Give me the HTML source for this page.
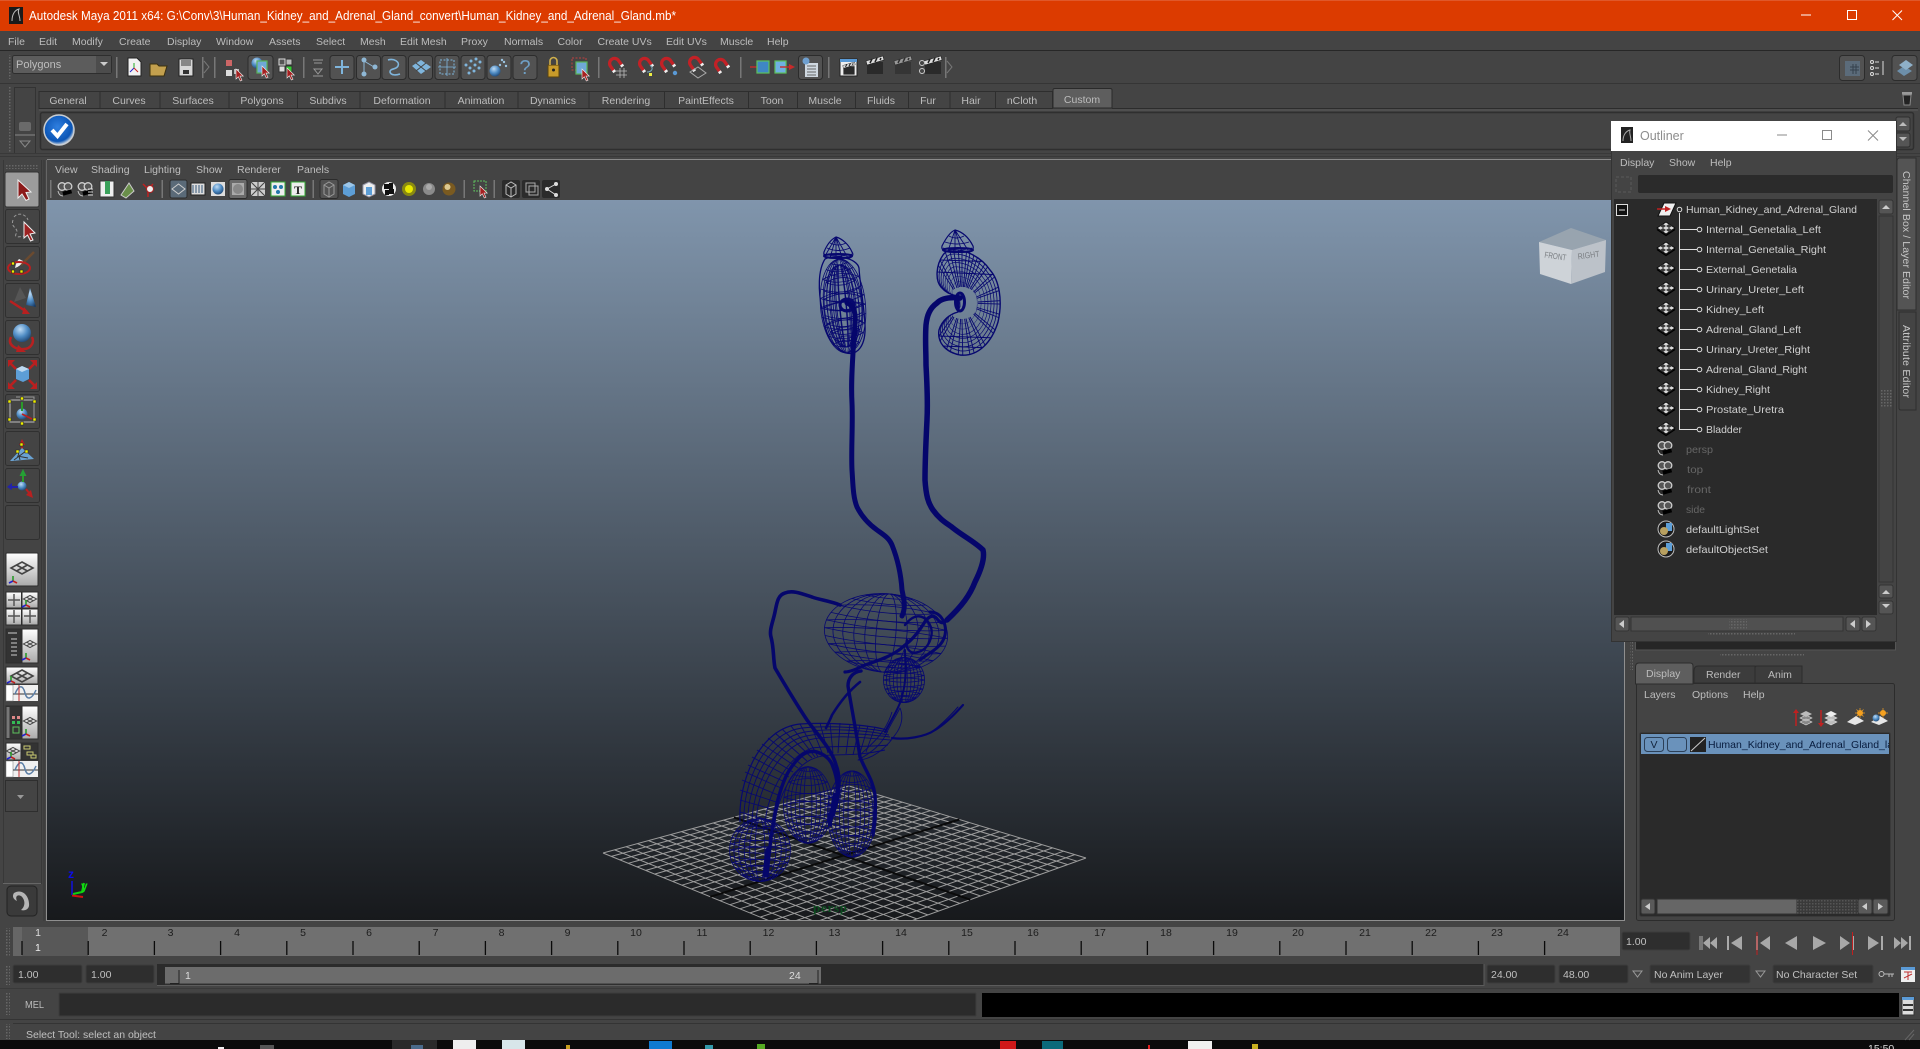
<!DOCTYPE html>
<html><head><meta charset="utf-8"><title>Autodesk Maya 2011</title>
<style>
html,body{margin:0;padding:0;background:#444;width:1920px;height:1049px;overflow:hidden}
svg{position:absolute;left:0;top:0;display:block}
text{font-family:"Liberation Sans",sans-serif;font-size:10.5px;fill:#bdbdbd}
.c{text-anchor:middle}
.o{fill:#d0d0d0}
.g{fill:#666}
.i{fill:#c0c0c0}
.sel{fill:#525252;stroke:#2c2c2c}
</style></head><body>
<svg width="1920" height="1049" viewBox="0 0 1920 1049">
<defs>
<linearGradient id="vp" x1="0" y1="0" x2="0" y2="1"><stop offset="0" stop-color="#8095ac"/><stop offset="1" stop-color="#17191c"/></linearGradient>
<clipPath id="vc"><rect x="47" y="200" width="1577" height="720"/></clipPath>
<symbol id="m" viewBox="-51 -51 102 102" preserveAspectRatio="none" overflow="visible">
<g fill="none" stroke="#07086f" stroke-width=".8">
<circle r="50" vector-effect="non-scaling-stroke"/><ellipse rx="8" ry="50" vector-effect="non-scaling-stroke"/><ellipse rx="17" ry="50" vector-effect="non-scaling-stroke"/><ellipse rx="26" ry="50" vector-effect="non-scaling-stroke"/><ellipse rx="35" ry="50" vector-effect="non-scaling-stroke"/><ellipse rx="43" ry="50" vector-effect="non-scaling-stroke"/>
<path vector-effect="non-scaling-stroke" d="M-50 0Q0 10 50 0M-49 -10Q0 0 49 -10M-46 -20Q0 -10 46 -20M-40 -30Q0 -21 40 -30M-30 -40Q0 -33 30 -40M-19 -46Q0 -42 19 -46M-49 10Q0 20 49 10M-46 20Q0 30 46 20M-40 30Q0 39 40 30M-30 40Q0 47 30 40"/>
<path vector-effect="non-scaling-stroke" d="M-49 -10Q0 -20 49 -10M-46 20Q0 10 46 20M-40 -30Q0 -39 40 -30M-40 30Q0 21 40 30M-50 0Q0 -9 50 0M-30 40Q0 33 30 40"/>
</g></symbol>
<path id="bean" d="M943 255C936 265 935 280 941 287C946 293 952 295 957 296L958 312C950 314 942 320 939 330C937 342 945 352 960 355C978 357 992 342 998 322C1003 300 999 280 990 270C982 258 965 248 950 250C947 251 945 252 943 255Z"/>
<clipPath id="bc"><use href="#bean"/></clipPath>
<path id="ribs" d="M953.500 289.500L935 260M957 288L943 245M959.500 287L952 240M962 287L962 240M964.500 287L972 240M967 288L982 244M970 289L992 252M973.500 292L1002 265M976.500 297L1010 282M978 302L1012 300M977 307.500L1012 318M974.500 313L1005 338M970 317L992 358M966 318.500L977 365M962 319L963 365M958 318.500L948 362M954 317L935 350M950 314L932 330"/>
<path id="cs" d="M0 0V10L2.300 7.800L4.300 12L6 11.200L4 7.100H7.300Z"/>
<g id="mesh"><path d="M-9 0L0 -6L9 0L0 6Z" fill="#dadada" stroke="#0c0c0c" stroke-width=".9"/><path d="M-3 -4L0 -2L-3 0L-6 -2ZM3 -4L6 -2L3 0L0 -2ZM3 0L6 2L3 4L0 2ZM-3 0L0 2L-3 4L-6 2Z" fill="#3a3a3a"/><path d="M-9 1.500L0 7.500L9 1.500" stroke="#000" fill="none" stroke-width="1.200"/></g>
<g id="cam"><circle cx="-3" cy="-3.500" r="3.800" fill="#555" stroke="#cfcfcf" stroke-width="1.300"/><circle cx="3" cy="-3.500" r="3.800" fill="#555" stroke="#cfcfcf" stroke-width="1.300"/><rect x="-3" y="1" width="9" height="4" fill="#000" transform="rotate(-15)"/><path d="M-7 1Q-6 6 -2 6" stroke="#bbb" fill="none"/></g>
<g id="set"><circle r="8" fill="#1c1c1c" stroke="#bbb" stroke-width="1"/><rect x="0" y="-6" width="6" height="8" fill="#5d9ed6"/><circle cx="-2" cy="2" r="4" fill="#b8a060"/></g>
<g id="mg"><g transform="scale(.82)"><path d="M-6 5V-1A6 6 0 0 1 6 -1V5" fill="none" stroke="#c32126" stroke-width="4" transform="rotate(-35)"/><path d="M-6 5V8M6 5V8" stroke="#eee" stroke-width="4" transform="rotate(-35)"/></g></g>
<g id="dm"><path d="M0 -6L11 0L0 6L-11 0ZM-5.500 -3L5.500 3M5.500 -3L-5.500 3" stroke="#444" fill="none" stroke-width="1.600"/></g>
<g id="ax"><path d="M0 0V-5" stroke="#2a9a2a" stroke-width="1.600"/><path d="M0 0L-4 2" stroke="#2222cc" stroke-width="1.600"/><path d="M0 0L4 2" stroke="#c02020" stroke-width="1.600"/></g>
<g id="wv"><rect x="-16" y="-8" width="32" height="16" fill="#f0f0f0"/><rect x="-16" y="-8" width="7" height="16" fill="#fff" stroke="#777" stroke-width=".5"/><path d="M-9 1H16" stroke="#333"/><path d="M-7 1C-3 -9 1 -8 3 0C5 8 10 6 14 -3" stroke="#5a7ea6" stroke-width="1.500" fill="none"/><path d="M-3 -8V8" stroke="#c03030"/></g>
<g id="clap"><rect x="-8" y="-4" width="16" height="12" fill="#2a2a2a"/><path d="M-9 -5L8 -10L9 -6L-8 -1Z" fill="#ddd" stroke="#222" stroke-width=".6"/><path d="M-5 -3L-3 -7M0 -4L2 -8M5 -6L6 -8" stroke="#222" stroke-width="1.500"/></g>
<pattern id="hatch" width="3" height="3" patternUnits="userSpaceOnUse"><rect width="3" height="3" fill="#3a3a3a"/><rect width="1.500" height="1.500" fill="#555"/></pattern>
<pattern id="dots" width="3" height="3" patternUnits="userSpaceOnUse"><rect width="1.500" height="1.500" fill="#666"/></pattern>
<linearGradient id="wg" x1="0" y1="0" x2="0" y2="1"><stop offset="0" stop-color="#fff"/><stop offset="1" stop-color="#aaa"/></linearGradient>
<radialGradient id="bl" cx=".4" cy=".3" r=".8"><stop offset="0" stop-color="#bfdcf5"/><stop offset=".5" stop-color="#4f8cc4"/><stop offset="1" stop-color="#153a66"/></radialGradient>
<radialGradient id="chk" cx=".45" cy=".4" r=".6"><stop offset="0" stop-color="#2f7fe0"/><stop offset=".8" stop-color="#0b55b5"/><stop offset="1" stop-color="#d0d8e0"/></radialGradient>
</defs>

<rect width="1920" height="1049" fill="#444"/>
<rect x="47" y="200" width="1577" height="720" fill="url(#vp)"/>

<!-- perspective grid -->
<g clip-path="url(#vc)" fill="none">
<path stroke="#9c9c9c" stroke-width="1" d="M603 853L836 948M614.600 849.900L848 943.700M626.100 846.700L859.900 939.400M637.400 843.600L871.600 935.200M648.600 840.600L883.100 931.100M659.700 837.600L894.500 926.900M670.600 834.600L905.700 922.900M681.500 831.600L916.800 918.900M692.200 828.700L927.800 914.900M702.800 825.800L938.600 911.100M713.300 823L949.300 907.200M723.600 820.200L959.900 903.400M733.900 817.400L970.300 899.700M744 814.600L980.600 896M754.100 811.800L990.700 892.300M764 809.100L1000.800 888.700M773.900 806.500L1010.700 885.100M783.600 803.800L1020.500 881.600M793.200 801.200L1030.200 878.100M802.800 798.600L1039.800 874.600M812.200 796L1049.200 871.200M821.500 793.500L1058.600 867.900M830.800 791L1067.800 864.600M839.900 788.500L1077 861.200M849 786L1086 858"/>
<path stroke="#9c9c9c" stroke-width="1" d="M603 853L849 786M611.300 856.400L857.600 788.600M619.800 859.800L866.400 791.300M628.300 863.300L875.200 794M637 866.900L884.200 796.700M645.800 870.400L893.200 799.400M654.600 874.100L902.400 802.200M663.600 877.700L911.600 805M672.700 881.400L920.900 807.900M681.900 885.200L930.400 810.700M691.300 889L939.900 813.600M700.700 892.900L949.600 816.600M710.300 896.800L959.400 819.500M720 900.700L969.300 822.500M729.900 904.700L979.300 825.600M739.900 908.800L989.400 828.600M750 912.900L999.600 831.700M760.200 917.100L1010 834.900M770.600 921.300L1020.400 838.100M781.100 925.600L1031 841.300M791.800 930L1041.800 844.600M802.600 934.400L1052.600 847.900M813.600 938.900L1063.600 851.200M824.700 943.400L1074.700 854.600M836 948L1086 858"/>
<path stroke="#0a0a0a" stroke-width="2" d="M710.300 896.800L959.400 819.500M733.900 817.400L970.300 899.700"/>
</g>

<!-- title bar -->
<rect width="1920" height="31" fill="#dc3b00"/><rect width="1920" height="1" fill="#e0582a"/>
<rect x="9" y="7" width="14" height="17" fill="#1a1a1a"/><path d="M12 21C12 14 15 10 19 9C17 13 20 15 20 21" stroke="#bbb" fill="none"/>
<text x="29" y="20" style="font-size:12.500px;fill:#fff" textLength="647" lengthAdjust="spacingAndGlyphs">Autodesk Maya 2011 x64: G:\Conv\3\Human_Kidney_and_Adrenal_Gland_convert\Human_Kidney_and_Adrenal_Gland.mb*</text>
<path d="M1801 15H1811M1847.500 10.500H1856.500V19.500H1847.500ZM1892.500 10.500L1902 20M1902 10.500L1892.500 20" stroke="#fff" fill="none" stroke-width="1"/>

<!-- menu -->
<g>
<text x="8" y="45">File</text><text x="39" y="45">Edit</text><text x="72" y="45">Modify</text><text x="119" y="45">Create</text><text x="167" y="45">Display</text><text x="216" y="45">Window</text><text x="269" y="45">Assets</text><text x="316" y="45">Select</text><text x="360" y="45">Mesh</text><text x="400" y="45">Edit Mesh</text><text x="461" y="45">Proxy</text><text x="504" y="45">Normals</text><text x="557.500" y="45">Color</text><text x="597.500" y="45">Create UVs</text><text x="666" y="45">Edit UVs</text><text x="720" y="45">Muscle</text><text x="767" y="45">Help</text>
</g>
<rect y="50" width="1920" height="1" fill="#272727"/>
<rect y="83" width="1920" height="1" fill="#353535"/>

<!-- status toolbar -->
<rect x="8" y="55" width="3" height="24" fill="url(#dots)"/>
<rect x="12.500" y="55.500" width="99" height="18" rx="2" fill="#5c5c5c" stroke="#2e2e2e"/><rect x="96" y="56" width="15" height="17" fill="#4c4c4c"/><path d="M100 62H108L104 66Z" fill="#ccc"/>
<text x="16" y="68" style="font-size:11px">Polygons</text>
<g><rect x="116" y="57" width="1.500" height="21" fill="#777"/><rect x="214" y="57" width="1.500" height="21" fill="#777"/><rect x="303" y="57" width="1.500" height="21" fill="#777"/><rect x="598" y="57" width="1.500" height="21" fill="#777"/><rect x="740" y="57" width="1.500" height="21" fill="#777"/><rect x="828" y="57" width="1.500" height="21" fill="#777"/><rect x="945" y="57" width="1.500" height="21" fill="#777"/><rect x="202" y="57" width="1.500" height="21" fill="#777"/></g>
<path d="M128 58H137L141 62V76H128Z" fill="#f2f2f2" stroke="#222"/><path d="M134 68V63" stroke="#2a2"/><path d="M134 68L130 72" stroke="#22c"/><path d="M134 68L138 72" stroke="#c22"/>
<path d="M150 64H157L159 66H167L164 76H150Z" fill="#c3a04e" stroke="#3a2f10"/>
<path d="M179 59H193V76H179Z" fill="#d8d8d8" stroke="#222"/><rect x="181" y="59" width="10" height="7" fill="#888"/><rect x="183" y="70" width="6" height="4" fill="#333"/>
<path d="M204 61L209 67L204 73" fill="none" stroke="#777"/>
<rect x="226" y="60" width="6" height="6" fill="#c66"/><rect x="226" y="70" width="6" height="6" fill="#ddd"/><rect x="234" y="69" width="5" height="5" fill="#bbb"/><use href="#cs" x="236" y="69" fill="#a52020" stroke="#eee" stroke-width=".6"/>
<rect x="248" y="55.500" width="25" height="24" rx="3" class="sel"/><circle cx="257" cy="63" r="5.500" fill="url(#bl)"/><rect x="257" y="61" width="10" height="12" fill="#6fa8d8" stroke="#5ab45a" stroke-width="1.200"/><use href="#cs" x="262" y="66" fill="#a52020" stroke="#eee" stroke-width=".6"/>
<g><rect x="279" y="59" width="6" height="6" fill="#555" stroke="#ddd"/><rect x="286" y="59" width="6" height="6" fill="#bbb" stroke="#333"/><rect x="279" y="66" width="6" height="6" fill="#ddd" stroke="#333"/><rect x="286" y="66" width="6" height="6" fill="#3c3" stroke="#333"/><use href="#cs" x="287" y="68" fill="#a52020" stroke="#eee" stroke-width=".6"/></g>
<path d="M313 60H323M314 63H322M314 69H322L318 74ZM313 76H323" stroke="#999" fill="none"/>
<g><rect x="330" y="55.500" width="24" height="24" rx="3" class="sel"/><rect x="356.500" y="55.500" width="24" height="24" rx="3" class="sel"/><rect x="382" y="55.500" width="24" height="24" rx="3" class="sel"/><rect x="408.500" y="55.500" width="24" height="24" rx="3" class="sel"/><rect x="435" y="55.500" width="24" height="24" rx="3" class="sel"/><rect x="461" y="55.500" width="24" height="24" rx="3" class="sel"/><rect x="487" y="55.500" width="24" height="24" rx="3" class="sel"/><rect x="513" y="55.500" width="24" height="24" rx="3" class="sel"/></g>
<path d="M342 60V74M335 67H349" stroke="#7fb5dc" stroke-width="2"/>
<path d="M364 61L364 73M364 61L374 67" stroke="#8fb8d6" fill="none"/><circle cx="364" cy="60" r="2.500" fill="#8fb8d6"/><circle cx="364" cy="74" r="2.500" fill="#8fb8d6"/><circle cx="375" cy="67" r="2.500" fill="#8fb8d6"/>
<path d="M388 60C394 58 400 62 398 66C396 70 390 68 390 72C391 76 397 75 400 74" stroke="#7fb5dc" fill="none" stroke-width="1.600"/>
<path d="M412 66L421 60L431 67L421 74Z" fill="#7fb5dc"/><path d="M416 63L426 71M426 63L416 71" stroke="#444"/>
<rect x="440" y="60" width="14" height="14" fill="none" stroke="#7fb5dc" stroke-dasharray="2 1.500"/><path d="M447 58V76M438 67H456" stroke="#7fb5dc" stroke-width=".8"/>
<g fill="#7fb5dc"><circle cx="466" cy="65" r="1.500"/><circle cx="471" cy="61" r="1.500"/><circle cx="476" cy="59" r="1.500"/><circle cx="470" cy="68" r="1.500"/><circle cx="475" cy="65" r="1.500"/><circle cx="480" cy="62" r="1.500"/><circle cx="469" cy="73" r="1.500"/><circle cx="474" cy="71" r="1.500"/><circle cx="479" cy="68" r="1.500"/></g>
<circle cx="495" cy="71" r="5.500" fill="url(#bl)"/><g fill="#9cc4e0"><circle cx="500" cy="65" r="1.200"/><circle cx="504" cy="62" r="1.200"/><circle cx="506" cy="66" r="1.200"/><circle cx="502" cy="60" r="1.200"/></g>
<text x="525" y="74" class="c" style="font-size:20px;fill:#6f9fc4">?</text>
<rect x="548" y="65" width="11" height="12" fill="#c89b2a" stroke="#5a430f"/><path d="M550 65V61A3.500 3.500 0 0 1 557 61V65" fill="none" stroke="#d0b04c" stroke-width="1.600"/><circle cx="553.500" cy="70" r="1.500" fill="#222"/>
<rect x="572" y="58" width="14" height="12" fill="none" stroke="#c04040" stroke-dasharray="2 1.500"/><rect x="576" y="62" width="11" height="12" fill="#6fa8d8" stroke="#5ab45a" stroke-width="1.200"/><use href="#cs" x="582" y="69" fill="#a52020" stroke="#eee" stroke-width=".6"/>
<use href="#mg" x="615" y="64"/><path d="M616 71H627M616 75H627M620 68V78M624 68V78" stroke="#bbb" stroke-width=".8"/><use href="#mg" x="645" y="64"/><path d="M647 72C652 72 654 68 650 65" stroke="#7ab" fill="none"/><rect x="649" y="73" width="3" height="3" fill="#ee4"/>
<use href="#mg" x="667" y="64"/><circle cx="675" cy="73" r="2.200" fill="#5a9ad6"/><use href="#mg" x="695" y="63"/><path d="M690 72L698 67L706 73L698 78Z" fill="none" stroke="#aaa"/><use href="#mg" x="721" y="65"/>
<path d="M750 67H762" stroke="#c82a2a" stroke-width="1.400"/><path d="M759 64L765 67L759 70Z" fill="#c82a2a"/><rect x="757" y="61" width="12" height="12" fill="#3f87c4" stroke="#5dc25d" stroke-width="1.200"/>
<rect x="775" y="61" width="11" height="12" fill="#6fb0e2" stroke="#5dc25d" stroke-width="1.200"/><path d="M780 67H792" stroke="#c82a2a" stroke-width="1.400"/><path d="M789 64L795 67L789 70Z" fill="#c82a2a"/>
<rect x="798.500" y="55.500" width="24" height="24" rx="3" class="sel"/><rect x="805" y="63" width="13" height="14" fill="#cfd8e0"/><path d="M807 66H816M807 69H816M807 72H816M807 75H816" stroke="#666"/><circle cx="806" cy="61" r="3.500" fill="#6fa0d0"/>
<rect x="840" y="59" width="17" height="17" fill="#eee" stroke="#222"/><rect x="840" y="59" width="17" height="3" fill="#5a9ad6"/><g transform="translate(849 69) scale(.7)"><use href="#clap"/></g>
<use href="#clap" x="875" y="66"/><g opacity=".55"><use href="#clap" x="903" y="66"/></g><use href="#clap" x="933" y="66"/><circle cx="922" cy="63" r="2.500" fill="none" stroke="#ccc"/><circle cx="922" cy="71" r="2.500" fill="none" stroke="#ccc"/>
<path d="M947 61L952 67L947 73" fill="none" stroke="#777"/>

<!-- right toolbar -->
<rect x="1839.500" y="55.500" width="25" height="25" rx="3" class="sel"/><rect x="1845" y="61" width="15" height="15" fill="#5b6b7a"/><path d="M1853 64V74M1856 64V74M1850 67H1859M1850 70H1859" stroke="#34404c"/>
<g stroke="#ddd" fill="none"><circle cx="1872" cy="62" r="1.500"/><circle cx="1872" cy="68" r="1.500"/><circle cx="1872" cy="74" r="1.500"/><path d="M1875 62H1879M1875 68H1879M1875 74H1879M1883 61V75"/></g>
<rect x="1892" y="55.500" width="25" height="25" rx="3" class="sel"/><path d="M1897 71L1904 66L1912 71L1904 76Z" fill="#6d8faa"/><path d="M1899 65L1906 60L1913 65L1906 70Z" fill="#8fb0c8"/>

<!-- shelf tabs -->
<rect x="8" y="87" width="3" height="66" fill="url(#dots)"/>
<rect x="14.500" y="87.500" width="21" height="66" fill="#444" stroke="#333"/><rect x="19" y="122" width="12" height="9" rx="2" fill="#6a6a6a"/><path d="M15 135H35" stroke="#888"/><path d="M20 141H30L25 147Z" fill="none" stroke="#888"/>
<g fill="#444" stroke="#2e2e2e"><rect x="39" y="91.500" width="61" height="17"/><rect x="100" y="91.500" width="60" height="17"/><rect x="160" y="91.500" width="69" height="17"/><rect x="229" y="91.500" width="68.500" height="17"/><rect x="297.500" y="91.500" width="62.500" height="17"/><rect x="360" y="91.500" width="85" height="17"/><rect x="445" y="91.500" width="73" height="17"/><rect x="518" y="91.500" width="71" height="17"/><rect x="589" y="91.500" width="75.500" height="17"/><rect x="664.500" y="91.500" width="84" height="17"/><rect x="748.500" y="91.500" width="49" height="17"/><rect x="797.500" y="91.500" width="58" height="17"/><rect x="855.500" y="91.500" width="53" height="17"/><rect x="908.500" y="91.500" width="41.500" height="17"/><rect x="950" y="91.500" width="45.500" height="17"/><rect x="995.500" y="91.500" width="57" height="17"/></g>
<path d="M1053 108V90Q1053 88.500 1055 88.500H1110Q1112 88.500 1112 90V108Z" fill="#5e5e5e" stroke="#2a2a2a"/>
<g><text class="c" x="68" y="104">General</text><text class="c" x="129" y="104">Curves</text><text class="c" x="193" y="104">Surfaces</text><text class="c" x="262" y="104">Polygons</text><text class="c" x="328" y="104">Subdivs</text><text class="c" x="402" y="104">Deformation</text><text class="c" x="481" y="104">Animation</text><text class="c" x="553" y="104">Dynamics</text><text class="c" x="626" y="104">Rendering</text><text class="c" x="706" y="104">PaintEffects</text><text class="c" x="772" y="104">Toon</text><text class="c" x="825" y="104">Muscle</text><text class="c" x="881" y="104">Fluids</text><text class="c" x="928" y="104">Fur</text><text class="c" x="971" y="104">Hair</text><text class="c" x="1022" y="104">nCloth</text><text class="c" x="1082" y="103">Custom</text></g>
<path d="M39 108.500H1052M1112 108.500H1918" stroke="#2c2c2c"/><path d="M39 110H1918" stroke="#5a5a5a"/>
<rect x="40.500" y="112.500" width="1873" height="37" rx="2" fill="#444" stroke="#2f2f2f" stroke-width="1.500"/>
<path d="M0 153.500H1920" stroke="#393939"/><path d="M0 156.500H1920" stroke="#383838"/><path d="M47 159.500H1611" stroke="#8a8a8a"/>
<circle cx="59" cy="130" r="15" fill="url(#chk)" stroke="#c8cdd2" stroke-width="1.500"/><path d="M52 130L57.500 136L67 124" fill="none" stroke="#fff" stroke-width="4"/>
<rect x="1896" y="117" width="14" height="14" rx="2" fill="#555" stroke="#2e2e2e"/><path d="M1899 126H1907L1903 122Z" fill="#bbb"/><rect x="1896" y="133" width="14" height="14" rx="2" fill="#555" stroke="#2e2e2e"/><path d="M1899 137H1907L1903 141Z" fill="#bbb"/>
<path d="M1903 95H1911L1910 105H1904Z" fill="#222" stroke="#888"/><rect x="1902" y="92" width="10" height="2.500" fill="#999"/>

<!-- panel menu -->
<path d="M46.500 160V920" stroke="#666"/>
<text x="55" y="173">View</text><text x="91" y="173">Shading</text><text x="144" y="173">Lighting</text><text x="196" y="173">Show</text><text x="237" y="173">Renderer</text><text x="297" y="173">Panels</text>
<g fill="#777"><rect x="50" y="180" width="1.500" height="18"/><rect x="161.500" y="180" width="1.500" height="18"/><rect x="312.500" y="180" width="1.500" height="18"/><rect x="463.500" y="180" width="1.500" height="18"/><rect x="493.500" y="180" width="1.500" height="18"/></g>
<use href="#cam" x="65" y="190"/><use href="#cam" x="85" y="190"/><path d="M88 189H93M88 192H93M88 195H93" stroke="#ddd"/>
<rect x="100" y="181" width="14" height="16" fill="#eee" stroke="#333"/><rect x="105" y="181" width="5" height="13" fill="#3aa15a"/>
<path d="M121 195L129 183L134 191L126 198Z" fill="#6a8f4a" stroke="#ccc"/>
<path d="M143 184L148 189L153 184M148 189V197" stroke="#c02020" fill="none" stroke-width="1.500"/><circle cx="150" cy="189" r="3.500" fill="#eee" stroke="#a22"/>
<rect x="170" y="180" width="17" height="18" rx="2" class="sel" style="fill:#5a6a78"/><path d="M172 189L178.500 184L185 189L178.500 194Z" fill="none" stroke="#ccc"/>
<rect x="191" y="183" width="14" height="12" fill="#ddd" stroke="#222"/><path d="M193 185V193M196 185V193M199 185V193M202 185V193" stroke="#357"/>
<rect x="211" y="182" width="14" height="14" fill="#ddd"/><circle cx="218" cy="189" r="5.500" fill="url(#bl)"/>
<rect x="229" y="179.500" width="18" height="19" rx="2" class="sel" style="fill:#6a6a6a"/><rect x="232" y="183" width="12" height="12" fill="#aaa"/><circle cx="238" cy="189" r="5" fill="#888"/>
<rect x="251" y="182" width="14" height="14" fill="#ccc"/><path d="M251 182L265 196M265 182L251 196M258 182V196M251 189H265" stroke="#444"/>
<rect x="271" y="182" width="14" height="14" fill="#eee" stroke="#3a3"/><g fill="#27a"><circle cx="275" cy="187" r="2"/><circle cx="281" cy="187" r="2"/><circle cx="278" cy="192" r="2"/></g>
<rect x="291" y="182" width="14" height="14" fill="#eee" stroke="#3a3"/><text x="298" y="194" class="c" style="font-size:12px;fill:#222;font-family:'Liberation Serif',serif;font-weight:bold">T</text>
<rect x="320" y="179.500" width="18" height="19" rx="2" class="sel"/><path d="M324 185L329 182L334 185V194L329 197L324 194ZM324 185L329 188L334 185M329 188V197" fill="none" stroke="#999"/>
<path d="M343 185L349 182L355 185V194L349 197L343 194Z" fill="#5d9ed6"/><path d="M343 185L349 188L355 185L349 182Z" fill="#9cc6e8"/>
<path d="M363 185L369 182L375 185V194L369 197L363 194Z" fill="#eee" stroke="#99a"/><path d="M366 187L372 187V195L366 195Z" fill="#5d9ed6"/>
<circle cx="389" cy="189" r="7" fill="#eee"/><path d="M384 184H389V189H384ZM389 189H394V194H389ZM385 190H389V195H385ZM389 183H393V189H389Z" fill="#111"/>
<circle cx="409" cy="189" r="7" fill="#8a8a10"/><circle cx="409" cy="189" r="4" fill="#e8e800"/>
<circle cx="429" cy="189" r="6" fill="#8a8a8a"/><circle cx="429" cy="187" r="3" fill="#aaa"/>
<circle cx="449" cy="189" r="6.500" fill="#7a5a20"/><circle cx="447.500" cy="187" r="3" fill="#dcc890"/>
<rect x="474" y="181" width="12" height="10" fill="none" stroke="#5ec05e" stroke-dasharray="2 1"/><use href="#cs" x="480" y="186" fill="#a52020" stroke="#eee" stroke-width=".6"/>
<rect x="502" y="180" width="18" height="18" rx="2" fill="#2b2b2b"/><path d="M506 185L511 182L516 185V194L511 197L506 194Z M506 185L511 188L516 185M511 188V197" fill="none" stroke="#bbb"/>
<rect x="522" y="180" width="18" height="18" rx="2" fill="#2b2b2b"/><rect x="526" y="183" width="9" height="9" fill="none" stroke="#aaa"/><rect x="529" y="186" width="9" height="9" fill="none" stroke="#aaa"/>
<rect x="542" y="180" width="18" height="18" rx="2" fill="#2b2b2b"/><path d="M547 189L556 184M547 189L556 195" stroke="#ddd"/><g fill="#ddd"><circle cx="547" cy="189" r="2"/><circle cx="556" cy="184" r="2"/><circle cx="556" cy="195" r="2"/></g>

<!-- left toolbox -->
<path d="M3.500 160V884M41.500 160V884M44 160V921" stroke="#383838"/>
<rect x="6" y="165" width="33" height="4" fill="url(#dots)"/>
<rect x="5" y="172" width="34" height="35" rx="2" fill="#9c9c9c" stroke="#333"/>
<g fill="#444" stroke="#303030"><rect x="5.500" y="209.500" width="34" height="34" rx="2"/><rect x="5.500" y="246.500" width="34" height="34" rx="2"/><rect x="5.500" y="283.500" width="34" height="34" rx="2"/><rect x="5.500" y="320.500" width="34" height="34" rx="2"/><rect x="5.500" y="357.500" width="34" height="34" rx="2"/><rect x="5.500" y="394.500" width="34" height="34" rx="2"/><rect x="5.500" y="431.500" width="34" height="34" rx="2"/><rect x="5.500" y="468.500" width="34" height="34" rx="2"/><rect x="5.500" y="505.500" width="34" height="34" rx="2"/></g>
<path d="M18 180V198L22 194L26 200.500L29 199L26 192.500L31 192Z" fill="#8b1a1a" stroke="#eee"/>
<path d="M14 217C18 212 26 214 28 220M13 220C10 228 20 228 16 234C14 238 20 237 24 236" fill="none" stroke="#999" stroke-dasharray="3 2"/><path d="M24 222V238L27.500 235L30.500 241L33 240L30 234L35 233Z" fill="#9c2222" stroke="#eee"/>
<path d="M34 252L21 265" stroke="#6a4a30" stroke-width="2.500"/><path d="M15 268Q21 266 23 261L19 259Q16 262 15 268Z" fill="#eee"/><ellipse cx="19" cy="268" rx="11" ry="6" fill="none" stroke="#b82020" stroke-width="2"/><g fill="#ee0" stroke="#222" stroke-width=".6"><rect x="11.500" y="262" width="3" height="3"/><rect x="11.500" y="270" width="3" height="3"/><rect x="20" y="270" width="3" height="3"/></g>
<path d="M14 302L20 287L26 298Z" fill="#555"/><path d="M26 305L30 288L36 307Z" fill="url(#bl)"/><path d="M10 301L27 312" stroke="#b82020" stroke-width="2.500"/><path d="M24 307L30 314L22 314Z" fill="#b82020"/>
<circle cx="22" cy="333" r="9" fill="url(#bl)"/><path d="M11 337C7 345 16 350 24 349C30 349 35 343 32 337" fill="none" stroke="#b82020" stroke-width="2.500"/><path d="M18 345L26 352H16Z" fill="#b82020"/>
<path d="M16 369L22 366L29 369V379L23 382L16 379Z" fill="#5d9ed6"/><path d="M16 369L22 372L29 369L22 366Z" fill="#bcd8ef"/><path d="M16 369L9 362M29 369L36 362M16 380L9 387M29 380L36 387" stroke="#b82020" stroke-width="2.600"/><path d="M8 360H15L8 367ZM37 360H30L37 367ZM8 389H15L8 382ZM37 389H30L37 382Z" fill="#b82020"/>
<rect x="10" y="400" width="24" height="22" fill="none" stroke="#bbb"/><path d="M16 397H34L34 417" fill="none" stroke="#999"/><circle cx="22" cy="414" r="5.500" fill="url(#bl)"/><path d="M22 411V402" stroke="#2a9a2a" stroke-width="2"/><path d="M22 414L32 419" stroke="#b82020" stroke-width="1.800"/><g fill="#ee0" stroke="#222" stroke-width=".5"><rect x="20.500" y="397" width="3" height="3"/><rect x="8" y="400" width="3" height="3"/><rect x="33" y="400" width="3" height="3"/><rect x="8" y="418" width="3" height="3"/><rect x="33" y="418" width="3" height="3"/><rect x="20.500" y="422" width="3" height="3"/></g>
<path d="M22 445L22 452" stroke="#b82020" stroke-width="1.600"/><path d="M19 445H25L22 439Z" fill="#b82020"/><path d="M10 461L22 448L34 459L12 461Z" fill="#6aa2d2"/><path d="M14 460L26 451M20 460L18 452M28 458L17 456" stroke="#333"/><g fill="#ee0" stroke="#222" stroke-width=".5"><rect x="20" y="443" width="3" height="3"/><rect x="16" y="450" width="3" height="3"/><rect x="25" y="450" width="3" height="3"/></g>
<circle cx="22" cy="486" r="4.500" fill="url(#bl)"/><path d="M23 482V474" stroke="#2a9a2a" stroke-width="2"/><path d="M19.500 476H26.500L23 469Z" fill="#25a035"/><path d="M18 487H10" stroke="#2222aa" stroke-width="2"/><path d="M12 483V490L7 487Z" fill="#2222aa"/><path d="M26 489L30 494" stroke="#b82020" stroke-width="2"/><path d="M33 498L26 495L31 490Z" fill="#b82020"/>

<!-- layouts -->
<rect x="6" y="553" width="32" height="33" rx="1" fill="url(#wg)" stroke="#2e2e2e"/><use href="#dm" x="22" y="568"/><use href="#ax" x="13" y="581"/>
<rect x="6" y="592" width="15.500" height="16" fill="url(#wg)" stroke="#2e2e2e"/><rect x="22" y="592" width="16" height="16" fill="url(#wg)" stroke="#2e2e2e"/><rect x="6" y="609" width="15.500" height="16" fill="url(#wg)" stroke="#2e2e2e"/><rect x="22" y="609" width="16" height="16" fill="url(#wg)" stroke="#2e2e2e"/>
<path d="M8 600H20M14 594V606M8 616H20M14 610V623M24 616H36M30 610V623" stroke="#555" stroke-width="1.500"/><g transform="translate(30 599) scale(.6)"><use href="#dm"/></g><use href="#ax" x="26" y="605"/>
<rect x="6" y="629" width="15" height="34" fill="#333" stroke="#2e2e2e"/><rect x="22" y="629" width="16" height="34" fill="url(#wg)" stroke="#2e2e2e"/><path d="M8 633H17M11 639H17M11 643H17M11 647H17M11 651H17M11 655H17" stroke="#ccc"/><g transform="translate(30 644) scale(.6)"><use href="#dm"/></g><use href="#ax" x="26" y="658"/>
<rect x="6" y="667" width="32" height="17" fill="url(#wg)" stroke="#2e2e2e"/><use href="#dm" x="22" y="676"/><use href="#ax" x="11" y="681"/><use href="#wv" x="22" y="693"/>
<rect x="6" y="706" width="15" height="33" fill="#333" stroke="#2e2e2e"/><rect x="22" y="706" width="16" height="33" fill="url(#wg)" stroke="#2e2e2e"/><rect x="6.500" y="707" width="3" height="31" fill="#777"/><g fill="#dd8888"><rect x="12" y="716" width="3" height="3"/><rect x="17" y="716" width="3" height="3"/></g><g fill="#33bb55"><rect x="12" y="721" width="3" height="3"/><rect x="17" y="721" width="3" height="3"/></g><rect x="13" y="727" width="6" height="6" fill="none" stroke="#5dc25d"/><g transform="translate(30 721) scale(.6)"><use href="#dm"/></g><use href="#ax" x="26" y="734"/>
<rect x="6" y="743" width="15" height="17" fill="url(#wg)" stroke="#2e2e2e"/><rect x="22" y="743" width="16" height="17" fill="#333" stroke="#2e2e2e"/><g transform="translate(13 751) scale(.6)"><use href="#dm"/></g><use href="#ax" x="11" y="757"/><path d="M24 746H30V749H24ZM27 752H33V755H27ZM31 755H36V758H31Z" fill="none" stroke="#c9c870"/><use href="#wv" x="22" y="769"/>
<rect x="5.500" y="780.500" width="32" height="31" fill="#444" stroke="#2e2e2e"/><path d="M17 795H24L20.500 799Z" fill="#999"/>
<path d="M3 883.500H41" stroke="#666"/>
<rect x="7" y="886" width="30" height="30" rx="4" fill="#3a3a3a" stroke="#222"/><path d="M14 893C22 888 30 896 29 906C28 910 24 911 21 910C26 906 25 899 21 896C17 894 15 897 17 901C13 899 12 896 14 893Z" fill="#b5b5b5"/>

<!-- viewport frame -->
<path d="M46.500 200V920.500H1624.500V200" fill="none" stroke="#8f8f8f"/>

<!-- gizmo -->
<text x="68" y="878" style="font-size:12px;fill:#0c0cee;font-weight:bold">z</text>
<path d="M72 881V895" stroke="#1212dd" stroke-width="1.500"/><path d="M72 895.500L83 897" stroke="#d01010" stroke-width="2"/><path d="M73 894L82 892L84 883" stroke="#10d010" stroke-width="2" fill="none"/><text x="81" y="890" style="font-size:12px;fill:#10e010;font-weight:bold">y</text>

<!-- persp label -->
<text x="813" y="912" style="font-size:13px;fill:#0b4a1e;font-family:'Liberation Serif',serif;font-weight:bold" textLength="34">persp</text>

<!-- wireframe -->
<g fill="none" stroke="#07086f" stroke-width=".9" stroke-linejoin="round">
<use href="#m" x="820" y="258" width="46" height="96" transform="rotate(-5 843 306)"/>
<use href="#m" x="824" y="264" width="38" height="84" transform="rotate(-5 843 306)"/>
<path d="M825 259C818 270 818 290 822 310C825 330 828 345 846 353C858 356 866 345 865 325C864 305 860 285 859 268C857 258 835 254 825 259Z" stroke-width="1.300"/>
<path d="M836 237C830 240 826 247 824 252C823 256 826 258 830 258H848C852 258 854 255 852 252C849 245 843 239 836 237Z" stroke-width="1.200"/>
<path d="M830 243Q838 247 846 243M827 248Q838 253 850 248M824 254Q838 258 852 254M836 237L830 258M836 237L836 258M836 237L842 258M836 237L848 258M836 237L825 256"/>
<ellipse cx="838" cy="256" rx="14" ry="2" stroke-width="2"/>
<ellipse cx="847" cy="305" rx="7" ry="6" stroke-width="3"/>
<path d="M955 230C950 232 945 240 942 246C941 250 945 252 950 252H968C972 252 974 249 973 246C969 238 963 232 955 230Z" stroke-width="1.200"/>
<path d="M949 236Q956 240 964 236M945 242Q957 246 969 242M943 248Q957 252 972 248M955 230L948 251M955 230L955 252M955 230L962 252M955 230L968 250"/>
<ellipse cx="958" cy="250" rx="15" ry="2" stroke-width="2"/>
<use href="#bean" stroke-width="1.400"/>
<g clip-path="url(#bc)">
<use href="#bean" transform="translate(962 303) scale(.92) translate(-962 -303)"/>
<use href="#bean" transform="translate(962 303) scale(.84) translate(-962 -303)"/>
<use href="#bean" transform="translate(962 303) scale(.76) translate(-962 -303)"/>
<use href="#bean" transform="translate(962 303) scale(.68) translate(-962 -303)"/>
<use href="#bean" transform="translate(962 303) scale(.6) translate(-962 -303)"/>
<use href="#bean" transform="translate(962 303) scale(.5) translate(-962 -303)"/>
<use href="#bean" transform="translate(962 303) scale(.4) translate(-962 -303)"/>
<use href="#ribs"/><use href="#ribs" transform="rotate(5 962 303)"/>
<path d="M940 260L1000 262M937 272L1003 275M938 336L998 338M942 346L990 348"/>
</g>
<ellipse cx="960" cy="302" rx="4.500" ry="9" stroke-width="3"/>
<use href="#m" x="823" y="593" width="126" height="80" transform="rotate(5 886 633)"/>
<use href="#m" x="883" y="657" width="42" height="46"/>
<use href="#m" x="729" y="818" width="62" height="64"/>
<use href="#m" x="783" y="766" width="50" height="78"/>
<use href="#m" x="827" y="770" width="50" height="88"/>
<g>
<path d="M740 822C738 780 760 728 800 724C830 722 870 725 887 730" stroke-width="1.200"/>
<path d="M744 824C742 782 765 733 802 728C830 725 868 728 888 732"/>
<path d="M748 825C746 785 770 738 805 732C830 728 865 730 889 735"/>
<path d="M752 826C751 790 774 742 806 736C832 731 865 734 890 737"/>
<path d="M756 828C755 792 778 747 808 740C835 734 865 738 891 740"/>
<path d="M765 830C764 800 785 757 812 748C835 745 860 748 888 745"/>
<path d="M775 833C773 805 792 765 815 758C830 752 850 758 885 750"/>
<path d="M740 800L775 810M742 780L778 795M748 765L785 782M757 750L793 772M768 738L802 765M782 729L812 758M800 724L818 757M820 723L828 753M840 723L838 753M860 725L853 755M875 727L866 752M740 812L775 822M745 772L781 788M752 757L789 777M762 744L798 768M775 733L807 761M740 790L776 802M791 726L815 757M810 723L823 755M830 723L833 753M850 724L846 754M868 726L860 753"/>
<path d="M858 760C872 752 882 745 888 730C892 722 896 716 900 708C903 715 903 725 895 735C885 750 870 760 858 760ZM860 755C870 745 885 735 892 712"/>
</g>
</g>
<!-- tubes -->
<g fill="none" stroke="#05066b" stroke-linecap="round" stroke-linejoin="round">
<path d="M847 303C853 305 856 312 855 322C855 335 853 345 853 353C852 370 851 385 852 403C853 425 851 450 852 470C853 485 853 497 857 507C862 517 870 525 877 530C884 535 889 538 892 545C898 560 901 575 902 590C904 600 906 607 902 616" stroke-width="5"/>
<path d="M960 298C950 297 942 298 937 303C930 308 927 315 926 325C925 340 926 350 926 365C927 385 928 400 927 420C926 440 925 460 925 480C926 495 928 503 933 510C940 520 948 524 953 528C963 536 975 542 983 550C985 558 981 570 975 582C970 595 962 606 947 620" stroke-width="5.500"/>
<path d="M840 605C830 601 820 600 812 597C800 593 792 590 785 593C778 595 777 602 775 612C773 622 769 630 771 637C774 648 773 658 775 668C785 685 797 705 807 720C820 738 832 750 836 765C840 775 840 790 836 805C833 815 830 820 830 825" stroke-width="3.600"/>
<path d="M861 671C853 672 848 678 848 686C851 705 856 730 860 757C866 772 873 780 875 795C876 810 875 822 873 835" stroke-width="3.400"/>
<path d="M860 682C850 690 840 702 832 715C830 720 828 724 826 728" stroke-width="2.600"/>
<path d="M963 705C955 714 945 724 935 730C925 737 905 740 892 738" stroke-width="2.200"/>
<path d="M958 707C950 716 940 726 930 733" stroke-width="1"/>
<path d="M767 875C770 845 772 825 777 803C783 780 788 770 797 760C803 753 810 750 817 752C826 755 831 760 833 767C838 780 838 790 836 800C835 808 832 815 830 823" stroke-width="3.400"/>
<path d="M947 620C942 625 940 622 938 620C934 614 930 616 926 620C920 630 912 640 905 645C895 655 880 660 865 665C855 670 848 672 845 672" stroke-width="3.200"/>
<path d="M905 625C915 612 925 615 930 625C935 635 928 650 918 652C910 655 905 648 907 640" stroke-width="2.400"/>
<path d="M930 612C942 612 947 625 945 635C942 648 930 652 920 660" stroke-width="3"/>
<path d="M905 650C905 665 908 680 900 703C895 715 890 722 885 732" stroke-width="2"/>
<path d="M835 795C835 805 831 812 830 820" stroke-width="5"/>
<path d="M765 875L768 850" stroke-width="5"/>
</g>

<!-- view cube -->
<path d="M1571 228L1606 240L1572 250L1539 242Z" fill="#98a4af"/>
<path d="M1539 242L1572 250L1571 284L1540 274Z" fill="#ced3d8"/>
<path d="M1572 250L1606 240L1605 272L1571 284Z" fill="#bcc2c9"/>
<text x="1555" y="259" class="c" transform="rotate(8 1555 259)" style="font-size:8.500px;fill:#7a7e82" textLength="22" lengthAdjust="spacingAndGlyphs">FRONT</text>
<text x="1589" y="258" class="c" transform="rotate(-8 1589 258)" style="font-size:8.500px;fill:#7a7e82" textLength="22" lengthAdjust="spacingAndGlyphs">RIGHT</text>

<!-- right side tabs -->
<path d="M1897 310V161Q1897 158 1900 158H1916V310Z" fill="#545454" stroke="#2e2e2e"/>
<text transform="translate(1903 171) rotate(90)" style="font-size:10.500px;fill:#c8c8c8" textLength="128">Channel Box / Layer Editor</text>
<path d="M1899 312H1916V410H1901Q1899 410 1899 408Z" fill="#444" stroke="#2e2e2e"/>
<text transform="translate(1903 325) rotate(90)" style="font-size:10.500px;fill:#c8c8c8" textLength="73">Attribute Editor</text>

<!-- channel box remainder -->
<rect x="1635.500" y="630" width="260" height="20" fill="#262626" stroke="#555"/>
<rect x="1630" y="640" width="3" height="30" fill="url(#dots)"/>
<rect x="1720" y="653.500" width="84" height="3" fill="url(#dots)"/>

<!-- layer editor -->
<rect x="1636.500" y="683.500" width="258" height="237" rx="2" fill="#444" stroke="#2c2c2c"/>
<path d="M1694 683V671Q1694 666 1698 666H1755V683Z" fill="#3c3c3c" stroke="#2c2c2c"/><path d="M1755 683V668Q1755 666 1757 666H1802V683Z" fill="#3c3c3c" stroke="#2c2c2c"/>
<path d="M1635.500 684V667Q1635.500 663 1639 663H1690Q1693 663 1693 666V684Z" fill="#5e5e5e" stroke="#2c2c2c"/>
<text x="1646" y="677">Display</text><text x="1706" y="678">Render</text><text x="1768" y="678">Anim</text>
<text x="1644" y="698">Layers</text><text x="1692" y="698">Options</text><text x="1743" y="698">Help</text>
<path d="M1796 726V712" stroke="#c02020" stroke-width="1.500"/><path d="M1793 713H1799L1796 709Z" fill="#c02020"/><path d="M1800 722L1806 719L1812 722L1806 725ZM1800 718L1806 715L1812 718L1806 721Z" fill="#888" stroke="#ddd" stroke-width=".6"/><path d="M1800 714L1806 711L1812 714L1806 717Z" fill="#bbb"/>
<path d="M1821 710V724" stroke="#c02020" stroke-width="1.500"/><path d="M1818 723H1824L1821 727Z" fill="#c02020"/><path d="M1825 722L1831 719L1837 722L1831 725ZM1825 718L1831 715L1837 718L1831 721Z" fill="#bbb" stroke="#ddd" stroke-width=".6"/><path d="M1825 714L1831 711L1837 714L1831 717Z" fill="#eee"/>
<path d="M1847 722L1856 716L1864 721L1855 725Z" fill="#e6e6e6"/><circle cx="1860" cy="713" r="3" fill="#f4a020"/><path d="M1860 708V718M1855 713H1865M1856.500 709.500L1863.500 716.500M1863.500 709.500L1856.500 716.500" stroke="#f4a020" stroke-width=".7"/>
<path d="M1871 722L1880 716L1888 721L1879 725Z" fill="#e6e6e6"/><circle cx="1876" cy="718" r="3.500" fill="url(#bl)"/><circle cx="1883" cy="713" r="3" fill="#f4a020"/><path d="M1883 708V718M1878 713H1888" stroke="#f4a020" stroke-width=".7"/>
<rect x="1639.500" y="732.500" width="251" height="184" rx="2" fill="#2a2a2a" stroke="#3a3a3a"/>
<rect x="1641" y="734" width="248" height="20" fill="#6a92bb"/>
<rect x="1644.500" y="737.500" width="19" height="14" rx="3" fill="#6a92bb" stroke="#2c4058"/><text x="1654" y="748" class="c" style="fill:#12233c;font-size:10.500px">V</text>
<rect x="1667.500" y="737.500" width="19" height="14" rx="3" fill="#6a92bb" stroke="#2c4058"/>
<rect x="1690" y="737" width="16" height="15" fill="#222"/><path d="M1691 751L1705 738" stroke="#ccc"/>
<svg x="1708" y="734" width="181" height="20"><text x="0" y="14" style="fill:#081c3e;font-size:10.500px">Human_Kidney_and_Adrenal_Gland_layer</text></svg>
<rect x="1641" y="899" width="14" height="15" rx="2" fill="#5a5a5a" stroke="#333"/><path d="M1650 903V910L1645 906.500Z" fill="#ccc"/>
<rect x="1657" y="899" width="140" height="15" fill="#666" stroke="#333"/><rect x="1718" y="902" width="18" height="9" fill="url(#dots)"/>
<rect x="1797" y="899" width="61" height="15" fill="url(#hatch)"/>
<rect x="1858" y="899" width="14" height="15" rx="2" fill="#5a5a5a" stroke="#333"/><path d="M1867 903V910L1862 906.500Z" fill="#ccc"/>
<rect x="1873" y="899" width="15" height="15" rx="2" fill="#5a5a5a" stroke="#333"/><path d="M1878 903V910L1883 906.500Z" fill="#ccc"/>

<!-- outliner -->
<rect x="1611.500" y="121.500" width="285" height="520" fill="#444" stroke="#333"/>
<rect x="1611" y="121" width="285" height="30" fill="#fff"/>
<rect x="1621" y="127" width="12" height="16" fill="#222"/><path d="M1623 141C1623 135 1626 131 1630 130C1629 134 1631 136 1631 141" stroke="#aaa" fill="none"/>
<text x="1640" y="140" style="font-size:12.500px;fill:#8d8d8d">Outliner</text>
<path d="M1777 135H1787M1822.500 130.500H1831.500V139.500H1822.500ZM1868 130.500L1878 140.500M1878 130.500L1868 140.500" stroke="#8a8a8a" fill="none"/>
<text x="1620" y="166">Display</text><text x="1669" y="166">Show</text><text x="1710" y="166">Help</text>
<rect x="1616" y="177" width="15" height="15" fill="none" stroke="#5a5a5a" stroke-dasharray="3 2"/>
<rect x="1638" y="175" width="255" height="18" rx="2" fill="#2b2b2b"/>
<rect x="1614" y="199" width="263" height="416" fill="#2a2a2a"/>
<rect x="1616.500" y="204.500" width="11" height="11" fill="#111" stroke="#ddd"/><path d="M1619 210H1625" stroke="#ddd"/>
<path d="M1658 216L1664 203H1676L1670 216Z" fill="#eee" stroke="#111"/><path d="M1657 209H1668" stroke="#c02020" stroke-width="1.500"/><path d="M1665 206L1671 209L1665 212Z" fill="#c02020"/>
<path d="M1679.500 213V429.500H1697M1680 229.500H1697M1680 249.500H1697M1680 269.500H1697M1680 289.500H1697M1680 309.500H1697M1680 329.500H1697M1680 349.500H1697M1680 369.500H1697M1680 389.500H1697M1680 409.500H1697" stroke="#ddd" fill="none"/>
<g fill="#2a2a2a" stroke="#ddd"><circle cx="1679.500" cy="209.500" r="2.300"/><circle cx="1699.500" cy="229.500" r="2.300"/><circle cx="1699.500" cy="249.500" r="2.300"/><circle cx="1699.500" cy="269.500" r="2.300"/><circle cx="1699.500" cy="289.500" r="2.300"/><circle cx="1699.500" cy="309.500" r="2.300"/><circle cx="1699.500" cy="329.500" r="2.300"/><circle cx="1699.500" cy="349.500" r="2.300"/><circle cx="1699.500" cy="369.500" r="2.300"/><circle cx="1699.500" cy="389.500" r="2.300"/><circle cx="1699.500" cy="409.500" r="2.300"/><circle cx="1699.500" cy="429.500" r="2.300"/></g>
<use href="#mesh" x="1666" y="228"/><use href="#mesh" x="1666" y="248"/><use href="#mesh" x="1666" y="268"/><use href="#mesh" x="1666" y="288"/><use href="#mesh" x="1666" y="308"/><use href="#mesh" x="1666" y="328"/><use href="#mesh" x="1666" y="348"/><use href="#mesh" x="1666" y="368"/><use href="#mesh" x="1666" y="388"/><use href="#mesh" x="1666" y="408"/><use href="#mesh" x="1666" y="428"/>
<use href="#cam" x="1665" y="449"/><use href="#cam" x="1665" y="469"/><use href="#cam" x="1665" y="489"/><use href="#cam" x="1665" y="509"/>
<use href="#set" x="1666" y="529"/><use href="#set" x="1666" y="549"/>
<g>
<text class="o" x="1686" y="213" textLength="171" lengthAdjust="spacingAndGlyphs">Human_Kidney_and_Adrenal_Gland</text>
<text class="o" x="1706" y="233" textLength="115" lengthAdjust="spacingAndGlyphs">Internal_Genetalia_Left</text>
<text class="o" x="1706" y="253" textLength="120" lengthAdjust="spacingAndGlyphs">Internal_Genetalia_Right</text>
<text class="o" x="1706" y="273" textLength="91" lengthAdjust="spacingAndGlyphs">External_Genetalia</text>
<text class="o" x="1706" y="293" textLength="98" lengthAdjust="spacingAndGlyphs">Urinary_Ureter_Left</text>
<text class="o" x="1706" y="313" textLength="58" lengthAdjust="spacingAndGlyphs">Kidney_Left</text>
<text class="o" x="1706" y="333" textLength="95" lengthAdjust="spacingAndGlyphs">Adrenal_Gland_Left</text>
<text class="o" x="1706" y="353" textLength="104" lengthAdjust="spacingAndGlyphs">Urinary_Ureter_Right</text>
<text class="o" x="1706" y="373" textLength="101" lengthAdjust="spacingAndGlyphs">Adrenal_Gland_Right</text>
<text class="o" x="1706" y="393" textLength="64" lengthAdjust="spacingAndGlyphs">Kidney_Right</text>
<text class="o" x="1706" y="413" textLength="78" lengthAdjust="spacingAndGlyphs">Prostate_Uretra</text>
<text class="o" x="1706" y="433" textLength="36" lengthAdjust="spacingAndGlyphs">Bladder</text>
</g>
<text class="g" x="1686" y="453" textLength="27" lengthAdjust="spacingAndGlyphs">persp</text><text class="g" x="1687" y="473" textLength="16" lengthAdjust="spacingAndGlyphs">top</text><text class="g" x="1687" y="493" textLength="24" lengthAdjust="spacingAndGlyphs">front</text><text class="g" x="1686" y="513" textLength="19" lengthAdjust="spacingAndGlyphs">side</text>
<text class="o" x="1686" y="533" textLength="73" lengthAdjust="spacingAndGlyphs">defaultLightSet</text><text class="o" x="1686" y="553" textLength="82" lengthAdjust="spacingAndGlyphs">defaultObjectSet</text>
<rect x="1879" y="200" width="14" height="14" rx="2" fill="#555" stroke="#333"/><path d="M1882 209H1890L1886 205Z" fill="#ccc"/>
<rect x="1879" y="216" width="14" height="366" fill="#444" stroke="#333"/><rect x="1881" y="390" width="11" height="18" fill="url(#dots)"/>
<rect x="1879" y="585" width="14" height="13" rx="2" fill="#555" stroke="#333"/><path d="M1882 594H1890L1886 590Z" fill="#ccc"/>
<rect x="1879" y="601" width="14" height="13" rx="2" fill="#555" stroke="#333"/><path d="M1882 604H1890L1886 608Z" fill="#ccc"/>
<rect x="1615" y="617" width="14" height="14" rx="2" fill="#555" stroke="#333"/><path d="M1624 620V628L1619 624Z" fill="#ccc"/>
<rect x="1631" y="617" width="212" height="14" fill="#505050" stroke="#333"/><rect x="1729" y="619" width="18" height="10" fill="url(#dots)"/>
<rect x="1846" y="617" width="14" height="14" rx="2" fill="#555" stroke="#333"/><path d="M1855 620V628L1850 624Z" fill="#ccc"/>
<rect x="1862" y="617" width="14" height="14" rx="2" fill="#555" stroke="#333"/><path d="M1866 620V628L1871 624Z" fill="#ccc"/>
<rect x="1708" y="633" width="87" height="3" fill="url(#dots)"/>

<!-- timeline -->
<rect x="6" y="928" width="4" height="28" fill="url(#dots)"/>
<rect x="13" y="927" width="1607" height="29" fill="#707070"/><rect x="22" y="927" width="66" height="29" fill="#585858"/><rect x="13" y="927" width="9" height="29" fill="#666"/>
<path d="M22 941V955M88.200 941V955M154.400 941V955M220.600 941V955M286.800 941V955M353 941V955M419.200 941V955M485.400 941V955M551.600 941V955M617.800 941V955M684 941V955M750.200 941V955M816.400 941V955M882.600 941V955M948.800 941V955M1015 941V955M1081.200 941V955M1147.400 941V955M1213.600 941V955M1279.800 941V955M1346 941V955M1412.200 941V955M1478.400 941V955M1544.600 941V955" stroke="#0a0a0a" stroke-width="1.300"/>
<g>
<text class="c" x="38" y="936" style="fill:#ddd">1</text><text class="c" x="104.500" y="936" style="fill:#1d1d1d">2</text><text class="c" x="170.500" y="936" style="fill:#1d1d1d">3</text><text class="c" x="237" y="936" style="fill:#1d1d1d">4</text><text class="c" x="303" y="936" style="fill:#1d1d1d">5</text><text class="c" x="369" y="936" style="fill:#1d1d1d">6</text><text class="c" x="435.500" y="936" style="fill:#1d1d1d">7</text><text class="c" x="501.500" y="936" style="fill:#1d1d1d">8</text><text class="c" x="567.500" y="936" style="fill:#1d1d1d">9</text><text class="c" x="636" y="936" style="fill:#1d1d1d">10</text><text class="c" x="702" y="936" style="fill:#1d1d1d">11</text><text class="c" x="768.500" y="936" style="fill:#1d1d1d">12</text><text class="c" x="834.500" y="936" style="fill:#1d1d1d">13</text><text class="c" x="901" y="936" style="fill:#1d1d1d">14</text><text class="c" x="967" y="936" style="fill:#1d1d1d">15</text><text class="c" x="1033" y="936" style="fill:#1d1d1d">16</text><text class="c" x="1100" y="936" style="fill:#1d1d1d">17</text><text class="c" x="1166" y="936" style="fill:#1d1d1d">18</text><text class="c" x="1232" y="936" style="fill:#1d1d1d">19</text><text class="c" x="1298" y="936" style="fill:#1d1d1d">20</text><text class="c" x="1365" y="936" style="fill:#1d1d1d">21</text><text class="c" x="1431" y="936" style="fill:#1d1d1d">22</text><text class="c" x="1497" y="936" style="fill:#1d1d1d">23</text><text class="c" x="1563" y="936" style="fill:#1d1d1d">24</text>
</g>
<text x="35" y="951" style="fill:#eee">1</text>
<rect x="1622" y="932" width="68" height="18" rx="2" fill="#2e2e2e" stroke="#3c3c3c"/><text x="1626" y="945" class="i">1.00</text>
<g fill="#a8a8a8">
<path d="M1700 936V950M1702 936V950" stroke="#aaa"/><path d="M1710 937V949L1703 943ZM1717 937V949L1710 943Z"/>
<path d="M1728 936V950" stroke="#aaa" stroke-width="2"/><path d="M1742 936V950L1731 943Z"/>
<path d="M1757 936V950" stroke="#aaa" stroke-width="2"/><path d="M1770 936V950L1760 943Z"/><path d="M1757 932V955" stroke="#c02020"/>
<path d="M1797 936V950L1785 943Z"/>
<path d="M1813 936V950L1826 943Z"/>
<path d="M1840 936V950L1850 943Z"/><path d="M1853 936V950" stroke="#aaa" stroke-width="2"/><path d="M1852.500 932V955" stroke="#c02020"/>
<path d="M1868 936V950L1879 943Z"/><path d="M1882 936V950" stroke="#aaa" stroke-width="2"/>
<path d="M1894 937V949L1901 943ZM1901 937V949L1908 943Z"/><path d="M1910 936V950" stroke="#aaa" stroke-width="2"/>
</g>

<!-- range -->
<rect x="6" y="965" width="4" height="20" fill="url(#dots)"/>
<rect x="13" y="965" width="69" height="18" rx="2" fill="#2e2e2e" stroke="#3c3c3c"/><text x="18" y="978" class="i">1.00</text>
<rect x="86" y="965" width="68" height="18" rx="2" fill="#2e2e2e" stroke="#3c3c3c"/><text x="91" y="978" class="i">1.00</text>
<rect x="157" y="964" width="1327" height="22" fill="#2b2b2b"/><path d="M157 985.500H1484V964" fill="none" stroke="#5c5c5c"/>
<rect x="165" y="967" width="656" height="17" fill="#6c6c6c"/><path d="M165 984H821" stroke="#333"/>
<path d="M170 983.500H179V970" fill="none" stroke="#222"/><path d="M809 983.500H818V970" fill="none" stroke="#222"/>
<text x="185" y="979" style="fill:#ddd">1</text><text x="789" y="979" style="fill:#ddd">24</text>
<rect x="1487" y="965" width="68" height="18" rx="2" fill="#2e2e2e" stroke="#3c3c3c"/><text x="1491" y="978" class="i">24.00</text>
<rect x="1559" y="965" width="69" height="18" rx="2" fill="#2e2e2e" stroke="#3c3c3c"/><text x="1563" y="978" class="i">48.00</text>
<path d="M1633 971H1642L1637.500 977Z" fill="none" stroke="#999"/>
<rect x="1650" y="965" width="100" height="18" rx="2" fill="#333" stroke="#3c3c3c"/><text x="1654" y="978" class="i">No Anim Layer</text>
<path d="M1756 971H1765L1760.500 977Z" fill="none" stroke="#999"/>
<rect x="1773" y="965" width="100" height="18" rx="2" fill="#333" stroke="#3c3c3c"/><text x="1776" y="978" class="i">No Character Set</text>
<circle cx="1881.500" cy="974" r="2.500" fill="none" stroke="#bbb"/><path d="M1884 974H1894M1889 974V977M1892 974V977" stroke="#bbb"/>
<rect x="1901" y="967" width="14" height="15" fill="#eee"/><rect x="1901" y="967" width="14" height="3" fill="#5a9ad6"/><path d="M1904 972H1912M1908 972V980M1904 978L1912 974" stroke="#c03030"/>

<!-- command line -->
<path d="M0 988.500H1920" stroke="#3a3a3a"/>
<rect x="6" y="993" width="4" height="22" fill="url(#dots)"/>
<text x="25" y="1008" textLength="19" lengthAdjust="spacingAndGlyphs">MEL</text>
<rect x="59" y="993" width="917" height="23" rx="1" fill="#2b2b2b" stroke="#3c3c3c"/>
<rect x="982" y="993" width="917" height="24" fill="#000"/>
<rect x="1902" y="997" width="12" height="18" fill="#ddd" stroke="#333"/><rect x="1902" y="997" width="12" height="3" fill="#5a9ad6"/><path d="M1903 1005H1913M1903 1010H1913" stroke="#333" stroke-width="2"/>
<path d="M0 1019.500H1920M13 1023.500H1920" stroke="#343434"/>
<rect x="6" y="1024" width="4" height="15" fill="url(#dots)"/>
<text x="26" y="1038" style="font-size:10.500px;fill:#c0c0c0">Select Tool: select an object</text>

<!-- taskbar -->
<rect y="1040" width="1920" height="9" fill="#0b0b0b"/>
<rect x="392" y="1040" width="45" height="9" fill="#2a2a2a"/><rect x="411" y="1045" width="12" height="4" fill="#4a6a8a"/>
<rect x="218" y="1047" width="6" height="2" fill="#eee"/><rect x="260" y="1045" width="14" height="4" fill="#555"/>
<rect x="453" y="1040" width="23" height="9" fill="#eee"/><rect x="502" y="1040" width="23" height="9" fill="#d8e6ea"/><rect x="566" y="1045" width="4" height="4" fill="#c9a020"/>
<rect x="649" y="1041" width="23" height="8" fill="#0f7ad0"/><rect x="705" y="1045" width="8" height="4" fill="#39a"/><rect x="757" y="1044" width="8" height="5" fill="#5a2"/>
<rect x="1000" y="1041" width="16" height="8" fill="#d01818"/><rect x="1042" y="1041" width="21" height="8" fill="#0b6a7a"/><rect x="1148" y="1045" width="2" height="4" fill="#e02020"/><rect x="1188" y="1041" width="24" height="8" fill="#f0f0f0"/><rect x="1252" y="1044" width="6" height="5" fill="#c8b020"/>
<svg x="1860" y="1040" width="40" height="9"><text x="8" y="12" style="font-size:10.500px;fill:#ddd">15:50</text></svg>
<path d="M1905 1040L1914 1030M1909 1040L1914 1034" stroke="#666"/>
</svg>
</body></html>
